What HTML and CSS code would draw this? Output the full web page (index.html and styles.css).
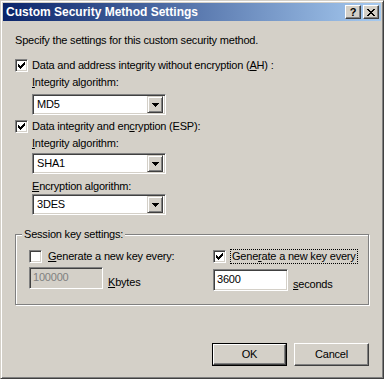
FILE: index.html
```html
<!DOCTYPE html>
<html>
<head>
<meta charset="utf-8">
<title>Custom Security Method Settings</title>
<link rel="stylesheet" href="styles.css">
</head>
<body>
<div class="window">
  <div class="titlebar">
    <span class="title">Custom Security Method Settings</span>
    <div class="caption-btns">
      <span class="cbtn help">?</span>
      <span class="cbtn close"><svg width="8" height="7" viewBox="0 0 8 7" shape-rendering="crispEdges"><path d="M0 0h2v1h-2zM6 0h2v1h-2zM1 1h2v1h-2zM5 1h2v1h-2zM2 2h4v1h-4zM3 3h2v1h-2zM2 4h4v1h-4zM1 5h2v1h-2zM5 5h2v1h-2zM0 6h2v1h-2zM6 6h2v1h-2z" fill="#000"/></svg></span>
    </div>
  </div>
  <div class="content">
    <p class="intro">Specify the settings for this custom security method.</p>

    <div class="check-row row-ah">
      <span class="cb"><svg class="tick" width="7" height="7" viewBox="0 0 7 7" shape-rendering="crispEdges"><path d="M6 0h1v1h-1zM5 1h2v1h-2zM0 2h1v1h-1zM4 2h3v1h-3zM0 3h2v1h-2zM3 3h3v1h-3zM0 4h5v1h-5zM1 5h3v1h-3zM2 6h1v1h-1z" fill="#000"/></svg></span>
      <span class="lbl">Data and address integrity without encryption (<u>A</u>H) :</span>
    </div>
    <div class="sub">
      <div class="field-label fl-1"><u>I</u>ntegrity algorithm:</div>
      <div class="select sel-1"><span class="val">MD5</span><span class="dd"><svg width="7" height="4" viewBox="0 0 7 4" shape-rendering="crispEdges"><path d="M0 0h7v1h-7zM1 1h5v1h-5zM2 2h3v1h-3zM3 3h1v1h-1z" fill="#000"/></svg></span></div>
    </div>

    <div class="check-row row-esp">
      <span class="cb"><svg class="tick" width="7" height="7" viewBox="0 0 7 7" shape-rendering="crispEdges"><path d="M6 0h1v1h-1zM5 1h2v1h-2zM0 2h1v1h-1zM4 2h3v1h-3zM0 3h2v1h-2zM3 3h3v1h-3zM0 4h5v1h-5zM1 5h3v1h-3zM2 6h1v1h-1z" fill="#000"/></svg></span>
      <span class="lbl">Data integrity and en<u>c</u>ryption (ESP):</span>
    </div>
    <div class="sub">
      <div class="field-label fl-2"><u>I</u>ntegrity algorithm:</div>
      <div class="select sel-2"><span class="val">SHA1</span><span class="dd"><svg width="7" height="4" viewBox="0 0 7 4" shape-rendering="crispEdges"><path d="M0 0h7v1h-7zM1 1h5v1h-5zM2 2h3v1h-3zM3 3h1v1h-1z" fill="#000"/></svg></span></div>
      <div class="field-label fl-3"><u>E</u>ncryption algorithm:</div>
      <div class="select sel-3"><span class="val">3DES</span><span class="dd"><svg width="7" height="4" viewBox="0 0 7 4" shape-rendering="crispEdges"><path d="M0 0h7v1h-7zM1 1h5v1h-5zM2 2h3v1h-3zM3 3h1v1h-1z" fill="#000"/></svg></span></div>
    </div>

    <div class="group">
      <span class="legend">Session key settings:</span>
      <div class="group-cols">
        <div class="gcol gcol-left">
          <div class="check-row">
            <span class="cb"></span>
            <span class="lbl boxed"><u>G</u>enerate a new key every:</span>
          </div>
          <div class="input-row in-left">
            <span class="textbox disabled">100000</span>
            <span class="unit"><u>K</u>bytes</span>
          </div>
        </div>
        <div class="gcol gcol-right">
          <div class="check-row">
            <span class="cb"><svg class="tick" width="7" height="7" viewBox="0 0 7 7" shape-rendering="crispEdges"><path d="M6 0h1v1h-1zM5 1h2v1h-2zM0 2h1v1h-1zM4 2h3v1h-3zM0 3h2v1h-2zM3 3h3v1h-3zM0 4h5v1h-5zM1 5h3v1h-3zM2 6h1v1h-1z" fill="#000"/></svg></span>
            <span class="lbl boxed focus">Gene<u>r</u>ate a new key every</span>
          </div>
          <div class="input-row in-right">
            <span class="textbox">3600</span>
            <span class="unit"><u>s</u>econds</span>
          </div>
        </div>
      </div>
    </div>

    <div class="buttons">
      <span class="btn default"><span class="btn-inner">OK</span></span>
      <span class="btn"><span class="btn-inner">Cancel</span></span>
    </div>
  </div>
</div>
</body>
</html>
```

FILE: styles.css
```css
html, body {
  margin: 0;
  padding: 0;
  background: #d4d0c8;
}
body {
  font-family: "Liberation Sans", Arial, sans-serif;
  font-size: 11px;
  letter-spacing: -0.2px;
  color: #000;
}
.window {
  width: 384px;
  height: 379px;
  box-sizing: border-box;
  border: 1px solid;
  border-color: #d4d0c8 #404040 #404040 #d4d0c8;
  box-shadow: inset 1px 1px 0 #fff, inset -1px -1px 0 #808080;
  padding: 2px;
  display: flex;
  flex-direction: column;
  background: #d4d0c8;
}
.titlebar {
  height: 18px;
  flex: none;
  display: flex;
  align-items: center;
  justify-content: space-between;
  background: linear-gradient(to right, #0a246a, #a6caf0);
  padding-left: 3px;
}
.title {
  color: #fff;
  font-weight: bold;
  font-size: 12px;
  letter-spacing: 0;
  line-height: 18px;
  white-space: nowrap;
}
.caption-btns {
  display: flex;
  gap: 2px;
  margin-right: 2px;
}
.cbtn {
  width: 16px;
  height: 14px;
  box-sizing: border-box;
  background: #d4d0c8;
  border: 1px solid;
  border-color: #fff #404040 #404040 #fff;
  box-shadow: inset -1px -1px 0 #808080;
  display: flex;
  align-items: center;
  justify-content: center;
}
.cbtn.help {
  font-weight: bold;
  font-size: 11px;
  letter-spacing: 0;
  line-height: 12px;
  padding-bottom: 1px;
}
.cbtn.close svg {
  display: block;
  margin-left: -1px;
}
.content {
  flex: 1;
  padding: 0 12px;
  display: flex;
  flex-direction: column;
}
.intro {
  margin: 13px 0 0;
  line-height: 13px;
}
.check-row {
  display: flex;
  align-items: center;
  height: 13px;
  line-height: 13px;
  white-space: nowrap;
}
.row-ah { margin-top: 12px; }
.row-esp { margin-top: 5px; }
.cb {
  width: 13px;
  height: 13px;
  box-sizing: border-box;
  flex: none;
  background: #fff;
  border: 1px solid;
  border-color: #808080 #fff #fff #808080;
  box-shadow: inset 1px 1px 0 #404040, inset -1px -1px 0 #d4d0c8;
  display: flex;
  align-items: center;
  justify-content: center;
}
.tick { display: block; }
.lbl { margin-left: 4px; }
.lbl.boxed {
  border: 1px solid transparent;
  padding: 0 1px;
  line-height: 13px;
}
.lbl.focus {
  border: 1px dotted #000;
}
.sub {
  padding-left: 17px;
  display: flex;
  flex-direction: column;
}
.field-label {
  line-height: 13px;
}
.fl-1 { margin-top: 4px; }
.fl-2 { margin-top: 4px; }
.fl-3 { margin-top: 6px; }
.select {
  width: 134px;
  height: 21px;
  box-sizing: border-box;
  background: #fff;
  border: 1px solid;
  border-color: #808080 #fff #fff #808080;
  box-shadow: inset 1px 1px 0 #404040, inset -1px -1px 0 #d4d0c8;
  padding: 2px;
  display: flex;
  align-items: center;
  justify-content: space-between;
}
.sel-1 { margin-top: 5px; }
.sel-2 { margin-top: 3px; }
.sel-3 { margin-top: 1px; }
.val {
  padding-left: 2px;
  line-height: 13px;
}
.dd {
  width: 16px;
  height: 17px;
  box-sizing: border-box;
  background: #d4d0c8;
  border: 1px solid;
  border-color: #d4d0c8 #404040 #404040 #d4d0c8;
  box-shadow: inset 1px 1px 0 #fff, inset -1px -1px 0 #808080;
  display: flex;
  align-items: center;
  justify-content: center;
}
.dd svg { display: block; }
.group {
  position: relative;
  margin-top: 19px;
  height: 71px;
  box-sizing: border-box;
  border: 1px solid #808080;
  box-shadow: inset 1px 1px 0 #fff, 1px 1px 0 #fff;
  padding: 15px 0 0 13px;
}
.legend {
  position: absolute;
  top: -7px;
  left: 6px;
  padding: 0 2px;
  background: #d4d0c8;
  line-height: 13px;
}
.group-cols {
  display: grid;
  grid-template-columns: 184px 1fr;
}
.gcol {
  display: flex;
  flex-direction: column;
}
.input-row {
  display: flex;
  align-items: flex-end;
}
.in-left { margin-top: 4px; }
.in-right { margin-top: 6px; }
.textbox {
  height: 22px;
  box-sizing: border-box;
  background: #fff;
  border: 1px solid;
  border-color: #808080 #fff #fff #808080;
  box-shadow: inset 1px 1px 0 #404040, inset -1px -1px 0 #d4d0c8;
  padding: 3px 3px 0;
  line-height: 13px;
}
.in-left .textbox {
  width: 74px;
  background: #d4d0c8;
  color: #808080;
}
.in-right .textbox {
  width: 75px;
}
.unit {
  margin-left: 5px;
  line-height: 13px;
}
.buttons {
  margin-top: 38px;
  display: flex;
  justify-content: flex-end;
  gap: 7px;
}
.btn {
  width: 75px;
  height: 23px;
  box-sizing: border-box;
  background: #d4d0c8;
  border: 1px solid;
  border-color: #fff #404040 #404040 #fff;
  box-shadow: inset -1px -1px 0 #808080;
  display: flex;
}
.btn.default {
  border-color: #000;
  box-shadow: none;
}
.btn-inner {
  flex: 1;
  display: flex;
  align-items: center;
  justify-content: center;
  line-height: 13px;
}
.btn.default .btn-inner {
  border: 1px solid;
  border-color: #fff #404040 #404040 #fff;
  box-shadow: inset -1px -1px 0 #808080;
}
```
